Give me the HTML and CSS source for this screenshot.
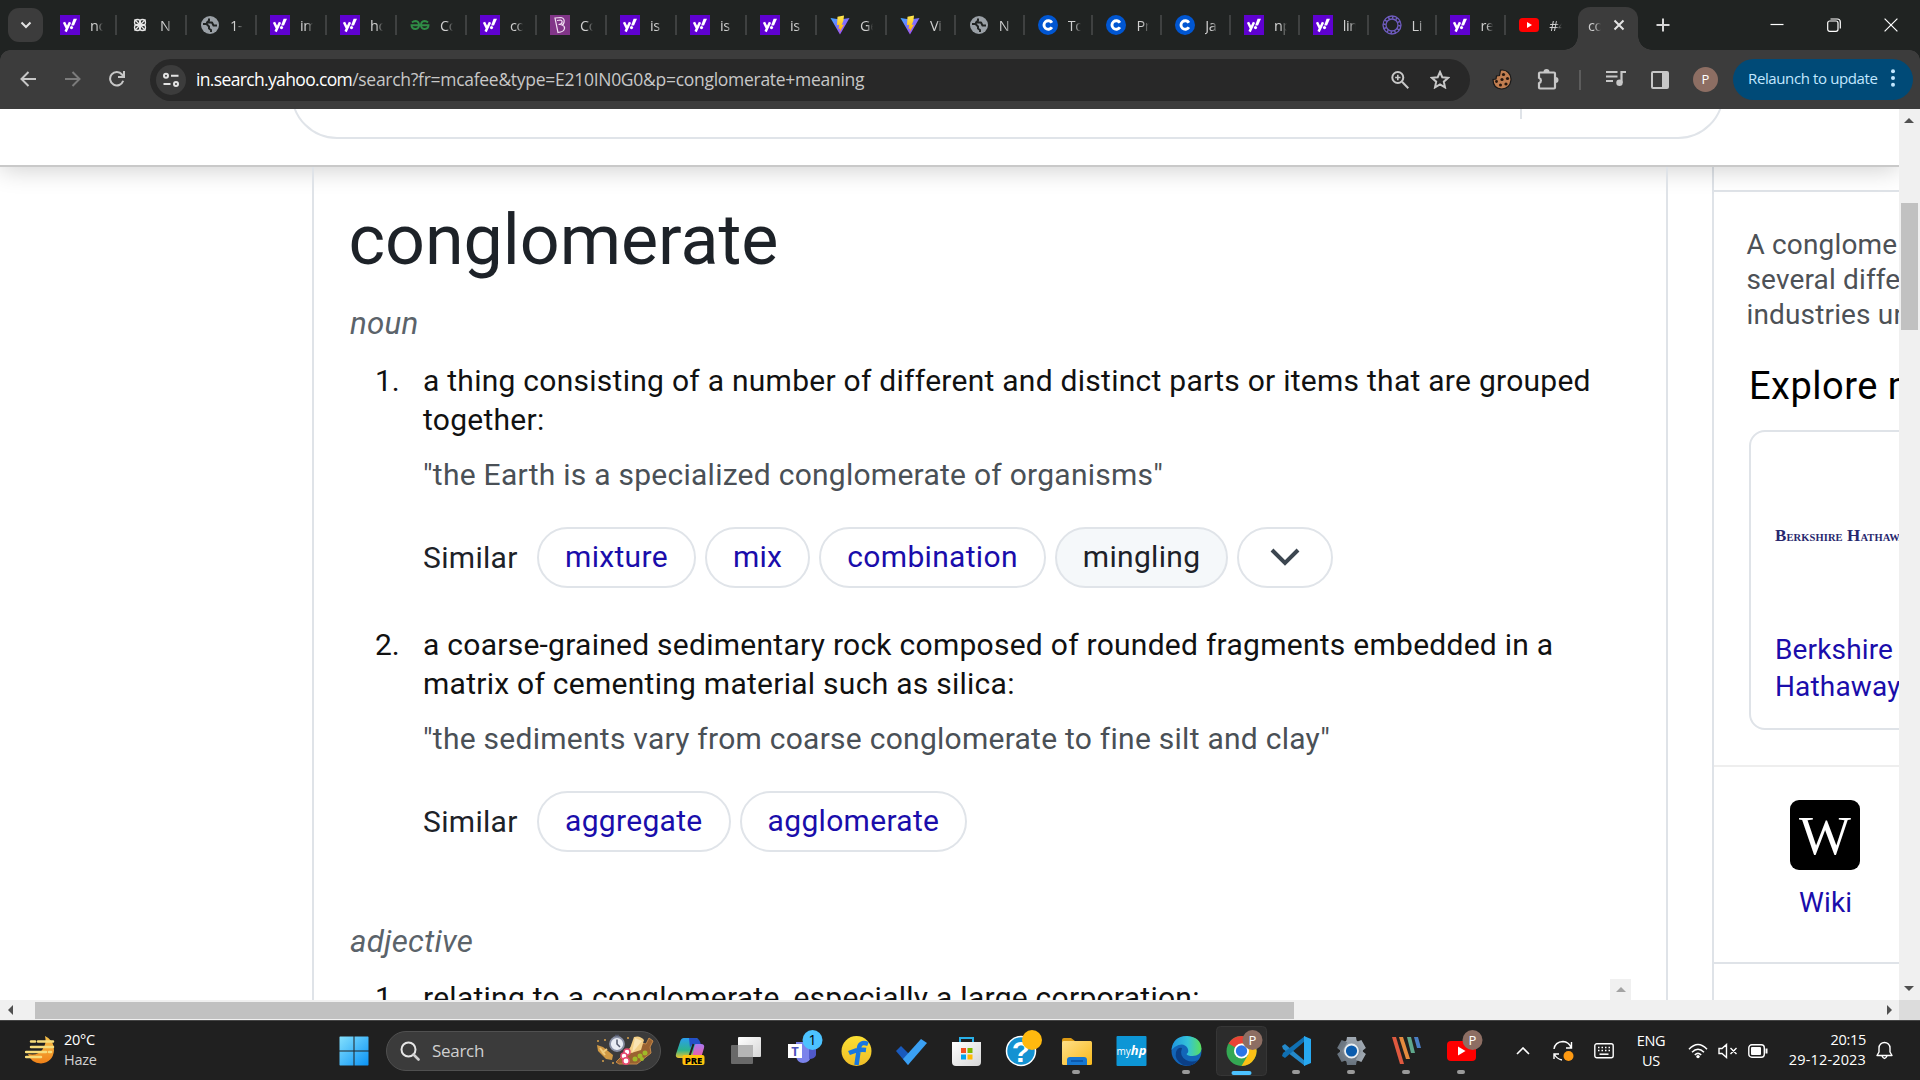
FILE: index.html
```html
<!DOCTYPE html>
<html lang="en">
<head>
<meta charset="utf-8">
<title>conglomerate meaning</title>
<link rel="stylesheet" href="styles.css">
</head>
<body>
<svg class="defs" width="0" height="0">
  <defs>
    <linearGradient id="g-vite" x1="0" y1="0" x2="1" y2="1"><stop offset="0" stop-color="#41a8ff"/><stop offset="1" stop-color="#bd34fe"/></linearGradient>
    <linearGradient id="g-bolt" x1="0" y1="0" x2="0" y2="1"><stop offset="0" stop-color="#ffea50"/><stop offset="1" stop-color="#ffa800"/></linearGradient>
    <linearGradient id="g-win" x1="0" y1="0" x2="1" y2="1"><stop offset="0" stop-color="#84e0fd"/><stop offset="1" stop-color="#0a93f5"/></linearGradient>
    <linearGradient id="g-moon" x1="0" y1="0" x2="0" y2="1"><stop offset="0" stop-color="#f6c24c"/><stop offset="1" stop-color="#f08118"/></linearGradient>
    <linearGradient id="g-cop1" x1="0" y1="0" x2="0" y2="1"><stop offset="0" stop-color="#2a9df0"/><stop offset=".6" stop-color="#2cb38f"/><stop offset="1" stop-color="#f0c62c"/></linearGradient>
    <linearGradient id="g-cop2" x1="0" y1="0" x2="0" y2="1"><stop offset="0" stop-color="#a878f0"/><stop offset=".6" stop-color="#e660b0"/><stop offset="1" stop-color="#f59350"/></linearGradient>
    <linearGradient id="g-white" x1="0" y1="0" x2="1" y2="1"><stop offset="0" stop-color="#fff"/><stop offset="1" stop-color="#d6d6d6"/></linearGradient>
    <linearGradient id="g-folder" x1="0" y1="0" x2="1" y2="1"><stop offset="0" stop-color="#ffe088"/><stop offset="1" stop-color="#f8b91c"/></linearGradient>
    <linearGradient id="g-edge" x1="0" y1="0" x2="1" y2="0"><stop offset="0" stop-color="#1e95e0"/><stop offset=".55" stop-color="#34c3d8"/><stop offset="1" stop-color="#5be05c"/></linearGradient>
    <linearGradient id="g-gear" x1="0" y1="0" x2="0" y2="1"><stop offset="0" stop-color="#a0a9b2"/><stop offset="1" stop-color="#67727d"/></linearGradient>
    <linearGradient id="g-flip" x1="0" y1="0" x2="0" y2="1"><stop offset="0" stop-color="#fbe033"/><stop offset="1" stop-color="#efbd28"/></linearGradient>
  </defs>
  <symbol id="yahoo" viewBox="0 0 20 20"><rect width="20" height="20" fill="#5f01d1"/><path d="M4 7.200l2.900 6M10 7.200L5.600 16.600" stroke="#fff" stroke-width="2.500" fill="none"/><path d="M13.600 3.800h3.400l-3 6.600h-2.900z" fill="#fff"/><circle cx="11.500" cy="12.600" r="1.600" fill="#fff"/></symbol>
  <symbol id="knot" viewBox="0 0 20 20"><g fill="none" stroke="#e6e6e6" stroke-width="1.300"><circle cx="7.500" cy="7.500" r="3"/><circle cx="12.500" cy="7.500" r="3"/><circle cx="7.500" cy="12.500" r="3"/><circle cx="12.500" cy="12.500" r="3"/><path d="M4.500 4.500l11 11M15.500 4.500l-11 11"/></g></symbol>
  <symbol id="globe" viewBox="0 0 20 20"><circle cx="10" cy="10" r="9" fill="#9aa0a6"/><path d="M3 9h3.500l2.500 2.500v2l2 1.500v2M9 3.500v2L7 7.500h5l1.500 3H17" stroke="#202322" stroke-width="2" fill="none" stroke-linejoin="round"/></symbol>
  <symbol id="gfg" viewBox="0 0 20 20"><g fill="none" stroke="#2f8d46" stroke-width="1.900"><path d="M2 7.500Q3.500 6 5.500 6 9 6.300 9 10T5.500 14Q1.500 14 1.500 10.300h17Q18.500 14 14.500 14 11 13.700 11 10T14.500 6Q16.500 6 18 7.500"/></g></symbol>
  <symbol id="byju" viewBox="0 0 20 20"><rect width="20" height="20" fill="#813588"/><path d="M5 3l6-.5q4 1 3 5-.5 2-2 2.500 3 1 2.500 3.500Q14 17 8 17.500zM7 5.500l3.500-.5q2 .5 1.500 2.500T8.500 9.500" fill="none" stroke="#f1dff3" stroke-width="1.200"/></symbol>
  <symbol id="vite" viewBox="0 0 20 20"><path d="M.5 3L10 19.500 19.500 3 10 4.500z" fill="url(#g-vite)"/><path d="M14 .5L7.500 1.800 7 10.200l2.200-.5L8.500 14l1.800-.6-.8 4L14 9.500l-2.300.4 1.700-4.200z" fill="url(#g-bolt)"/></symbol>
  <symbol id="coursera" viewBox="0 0 20 20"><circle cx="10" cy="10" r="10" fill="#0056d2"/><path d="M13.900 12.300a4.300 4.300 0 1 1 0-4.600" fill="none" stroke="#fff" stroke-width="2.900"/></symbol>
  <symbol id="ring" viewBox="0 0 20 20"><g fill="none" stroke="#6f5cc0"><circle cx="10" cy="10" r="9" stroke-width="1.300"/><circle cx="10" cy="10" r="6" stroke-width="1.300"/><circle cx="10" cy="10" r="7.500" stroke-width="2.600" stroke-dasharray="1.500 2.400"/></g></symbol>
  <symbol id="youtube" viewBox="0 0 20 20"><rect y="3" width="20" height="14" rx="3.500" fill="#f00"/><path d="M8 7v6l5-3z" fill="#fff"/></symbol>
</svg>

<header class="tabstrip">
  <button class="tab-search"><svg width="12" height="8" viewBox="0 0 12 8"><path d="M1.500 1.500L6 6l4.500-4.500" fill="none" stroke="#e3e3e3" stroke-width="2"/></svg></button>
  <div class="tab"><svg><use href="#yahoo"/></svg><span>no</span></div>
  <div class="tab"><svg><use href="#knot"/></svg><span>N</span></div>
  <div class="tab"><svg><use href="#globe"/></svg><span>1-</span></div>
  <div class="tab"><svg><use href="#yahoo"/></svg><span>im</span></div>
  <div class="tab"><svg><use href="#yahoo"/></svg><span>ho</span></div>
  <div class="tab"><svg><use href="#gfg"/></svg><span>Co</span></div>
  <div class="tab"><svg><use href="#yahoo"/></svg><span>co</span></div>
  <div class="tab"><svg><use href="#byju"/></svg><span>Co</span></div>
  <div class="tab"><svg><use href="#yahoo"/></svg><span>is</span></div>
  <div class="tab"><svg><use href="#yahoo"/></svg><span>is</span></div>
  <div class="tab"><svg><use href="#yahoo"/></svg><span>is</span></div>
  <div class="tab"><svg><use href="#vite"/></svg><span>Ge</span></div>
  <div class="tab slim"><svg><use href="#vite"/></svg><span>Vi</span></div>
  <div class="tab slim"><svg><use href="#globe"/></svg><span>N</span></div>
  <div class="tab slim"><svg><use href="#coursera"/></svg><span>To</span></div>
  <div class="tab slim"><svg><use href="#coursera"/></svg><span>Pr</span></div>
  <div class="tab slim"><svg><use href="#coursera"/></svg><span>Ja</span></div>
  <div class="tab slim"><svg><use href="#yahoo"/></svg><span>np</span></div>
  <div class="tab slim"><svg><use href="#yahoo"/></svg><span>lin</span></div>
  <div class="tab slim"><svg><use href="#ring"/></svg><span>Li</span></div>
  <div class="tab slim"><svg><use href="#yahoo"/></svg><span>re</span></div>
  <div class="tab slim last"><svg><use href="#youtube"/></svg><span>#4</span></div>
  <div class="tab-active"><span>co</span><svg width="12" height="12" viewBox="0 0 12 12"><path d="M1.500 1.500l9 9M10.500 1.500l-9 9" stroke="#e3e3e3" stroke-width="2"/></svg></div>
  <svg class="plus" width="14" height="14" viewBox="0 0 14 14"><path d="M7 .5v13M.5 7h13" stroke="#d6d6d6" stroke-width="2"/></svg>
  <div class="window-buttons">
    <svg width="14" height="14" viewBox="0 0 14 14"><path d="M.5 6.500h13" stroke="#fff" stroke-width="1.200"/></svg>
    <svg width="14" height="14" viewBox="0 0 14 14"><g fill="none" stroke="#fff" stroke-width="1.200"><rect x=".7" y="3" width="10.300" height="10.300" rx="2"/><path d="M3.500 1h6.800q3 0 3 3v6.500"/></g></svg>
    <svg width="14" height="14" viewBox="0 0 14 14"><path d="M.6.600l12.800 12.800M13.400.6L.6 13.400" stroke="#fff" stroke-width="1.200"/></svg>
  </div>
</header>

<nav class="toolbar">
  <svg class="nav-icon" viewBox="0 0 16 16"><path d="M8.500 1L1.500 8l7 7M1.500 8H16" fill="none" stroke="#c7c7c7" stroke-width="2"/></svg>
  <svg class="nav-icon" viewBox="0 0 16 16"><path d="M7.500 1l7 7-7 7M14.500 8H0" fill="none" stroke="#7b7b7b" stroke-width="2"/></svg>
  <svg class="nav-icon" viewBox="0 0 16 16"><path d="M14.200 9.800A6.700 6.700 0 1 1 13 3.500L15 5.800M15 0v6H9" fill="none" stroke="#c7c7c7" stroke-width="2"/></svg>
  <div class="omnibox">
    <div class="site-info"><svg width="16" height="16" viewBox="0 0 16 16"><g fill="none" stroke="#e3e3e3" stroke-width="2"><circle cx="3" cy="3.800" r="2"/><path d="M8 3.800h7.500M.5 12h7"/><circle cx="13" cy="12" r="2"/></g></svg></div>
    <div class="url">in.search.yahoo.com<span>/search?fr=mcafee&amp;type=E210IN0G0&amp;p=conglomerate+meaning</span></div>
    <svg class="zoom-icon" width="18" height="18" viewBox="0 0 18 18"><g fill="none" stroke="#c7c7c7" stroke-width="2"><circle cx="6.800" cy="6.500" r="5.500"/><path d="M11 10.700l6.300 6.500"/><path d="M6.800 3.800v5.400M4.100 6.500h5.400" stroke-width="1.600"/></g></svg>
    <svg class="star-icon" width="20" height="19" viewBox="0 0 20 19"><path d="M10 2l2.300 5.200 5.800.6-4.300 3.900 1.200 5.700-5-2.900-5 2.900 1.200-5.700L1.900 7.800l5.800-.6z" fill="none" stroke="#c7c7c7" stroke-width="2"/></svg>
  </div>
  <svg class="cookie" width="20" height="21" viewBox="0 0 20 21"><path d="M8.500 1.200Q13 .3 16.300 3.500 19.300 6.500 19 11q-1 8.500-9.300 9Q1 19.500 1 10.500l3-.5.500-3 3-.5z" fill="#c07d50" stroke="#191919" stroke-width="1.200"/><g fill="#25160e"><circle cx="11.500" cy="5.500" r="1.600"/><circle cx="15.500" cy="9.500" r="1.600"/><circle cx="10" cy="10.500" r="1.600"/><circle cx="4.500" cy="12.500" r="1.400"/><circle cx="14" cy="15" r="1.600"/><circle cx="8.500" cy="16" r="1.500"/></g></svg>
  <svg class="puzzle" width="22" height="22" viewBox="0 0 22 22"><path d="M3 4.500h14q1 0 1 1v14q0 1-1 1H3q-1 0-1-1v-4.200a3 3 0 0 0 0-5.600V5.500q0-1 1-1z" fill="none" stroke="#c7c7c7" stroke-width="2.200"/><path d="M6.500 4a3 3 0 0 1 6 0zM18.500 9a3 3 0 0 1 0 6z" fill="#c7c7c7"/></svg>
  <div class="divider"></div>
  <svg class="music" width="20" height="17" viewBox="0 0 20 17"><path d="M0 2h11.500M0 6.500h11.500M0 11h7M15.500 13V2H20" fill="none" stroke="#c7c7c7" stroke-width="2.200"/><circle cx="13.500" cy="12.800" r="3.200" fill="#c7c7c7"/></svg>
  <svg class="panel" width="18" height="18" viewBox="0 0 18 18"><rect x="1" y="1" width="16" height="16" rx="1" fill="none" stroke="#c7c7c7" stroke-width="2"/><path d="M11 1h6v16h-6z" fill="#c7c7c7"/></svg>
  <div class="avatar">P</div>
  <div class="relaunch"><span>Relaunch to update</span><svg width="4" height="18" viewBox="0 0 4 18"><g fill="#c2e7ff"><circle cx="2" cy="2.200" r="2"/><circle cx="2" cy="9" r="2"/><circle cx="2" cy="15.800" r="2"/></g></svg></div>
</nav>

<div class="window-body">
  <div class="page">
    <div class="searchbar"><div class="searchbox"><i></i></div></div>
    <div class="columns">
      <main class="dictionary">
        <h1>conglomerate</h1>
        <p class="pos">noun</p>
        <section class="sense">
          <div class="num">1.</div>
          <div>
            <p class="meaning">a thing consisting of a number of different and distinct parts or items that are grouped<br>together:</p>
            <p class="example">"the Earth is a specialized conglomerate of organisms"</p>
            <div class="similar"><span class="label">Similar</span><a>mixture</a><a>mix</a><a>combination</a><a class="plain">mingling</a><a class="more"><svg width="30" height="18" viewBox="0 0 30 18"><path d="M2 2l13 13L28 2" fill="none" stroke="#3c4650" stroke-width="4"/></svg></a></div>
          </div>
        </section>
        <section class="sense">
          <div class="num">2.</div>
          <div>
            <p class="meaning">a coarse-grained sedimentary rock composed of rounded fragments embedded in a<br>matrix of cementing material such as silica:</p>
            <p class="example">"the sediments vary from coarse conglomerate to fine silt and clay"</p>
            <div class="similar"><span class="label">Similar</span><a>aggregate</a><a>agglomerate</a></div>
          </div>
        </section>
        <p class="pos adjective">adjective</p>
        <section class="sense">
          <div class="num">1.</div>
          <div><p class="meaning">relating to a conglomerate, especially a large corporation:</p></div>
        </section>
        <div class="inner-scroll"><svg width="10" height="5" viewBox="0 0 10 5"><path d="M0 5l5-5 5 5z" fill="#a3a3a3"/></svg></div>
      </main>
      <aside class="sidebar">
        <div class="summary">
          <p>A conglome<br>several diffe<br>industries un</p>
          <h2>Explore more</h2>
          <div class="card"><div class="logo">B<small>ERKSHIRE</small> H<small>ATHAWAY</small></div><a>Berkshire<br>Hathaway</a></div>
        </div>
        <div class="wiki"><div class="w">W</div><a>Wiki</a></div>
      </aside>
    </div>
  </div>
  <div class="vscroll">
    <svg width="10" height="5" viewBox="0 0 10 5"><path d="M0 5l5-5 5 5z" fill="#505050"/></svg>
    <div class="vthumb"></div>
    <svg class="down" width="10" height="5" viewBox="0 0 10 5"><path d="M0 0l5 5 5-5z" fill="#505050"/></svg>
  </div>
</div>
<div class="hscroll">
  <svg width="5" height="10" viewBox="0 0 5 10"><path d="M5 0L0 5l5 5z" fill="#505050"/></svg>
  <div class="hthumb"></div>
  <svg class="right" width="5" height="10" viewBox="0 0 5 10"><path d="M0 0l5 5-5 5z" fill="#505050"/></svg>
  <div class="corner"></div>
</div>

<footer class="taskbar">
  <div class="weather">
    <svg width="31" height="30" viewBox="0 0 31 30"><path d="M20 1q9 4 9 14.500Q28 27 16 28.500 6 28 3 19q10 2 14.500-4.500Q22 8 20 1z" fill="url(#g-moon)"/><path d="M6 6.500h4M13 6.500h15M6 12h22M1 17h20M24 17h2M1 22h15" stroke="#f7dc7a" stroke-width="2.500" stroke-linecap="round"/></svg>
    <div>20°C<br><span>Haze</span></div>
  </div>
  <svg class="start" width="30" height="30" viewBox="0 0 30 30"><path d="M1 .5h13.500v14H.5V1zM15.500.5H29l.5.5v13.500h-14zM.5 15.500h14v14H1l-.5-.5zM15.500 15.500h14V29l-.5.500H15.500z" fill="url(#g-win)"/></svg>
  <div class="search">
    <svg width="20" height="20" viewBox="0 0 20 20"><circle cx="8.500" cy="8.500" r="7" fill="none" stroke="#e6e6e6" stroke-width="2"/><path d="M13.500 13.500l5 5" stroke="#d0d0d0" stroke-width="2.600" stroke-linecap="round"/></svg>
    <span>Search</span>
    <svg class="food" width="62" height="34" viewBox="0 0 62 34"><path d="M22 28L42 8l10 2 3-6 4 3-3 6 1 6-14 11H25z" fill="#9a6230" stroke="#c58a4a"/><path d="M34 20L40 3q6-2 10 3L47 16z" fill="#f3cf86"/><path d="M41 4l7 3-10 12" fill="#fae4b3"/><path d="M3 11l6 2 10 8-1 5-6-1L4 17z" fill="#d19a45"/><path d="M6 14l5 7M13 15l-5 4" stroke="#f0ca7c" stroke-width="2"/><circle cx="23" cy="10" r="7" fill="#e9ecf4" stroke="#8990a5" stroke-width="1.800"/><path d="M23 5.500V10l3 3M21 1.500h4" stroke="#52586b" stroke-width="1.500" fill="none"/><g fill="#fff" stroke="#e84870" stroke-width="1.500"><circle cx="33" cy="18" r="3"/><circle cx="30" cy="22" r="3"/><circle cx="32" cy="27" r="3.200"/></g><g fill="#9fb928"><circle cx="46" cy="22" r="2.500"/><circle cx="51" cy="19" r="2.500"/><circle cx="41" cy="25" r="2.500"/><circle cx="48" cy="25" r="2"/></g><g fill="#d8a24c"><circle cx="11" cy="6" r="1"/><circle cx="34" cy="4" r="1"/><circle cx="19" cy="29" r="1"/><circle cx="9" cy="27" r="1"/><circle cx="4" cy="7" r="1"/></g></svg>
  </div>
  <div class="apps">
    <svg viewBox="0 0 55 60"><path d="M20 17h11q4 0 3 3l-5 14q-1 3-5 3h-9q-4 0-3-4l4-12q1-4 4-4z" fill="url(#g-cop1)"/><path d="M25 17h7q4 1 5 7l-5-1q-5 0-6 4z" fill="#2450c8"/><path d="M32 23h5q4 0 3 4l-3 10q-1 4-5 4h-9q4 0 5-4l2-10q1-4 2-4z" fill="url(#g-cop2)"/><path d="M29.500 23l-4 12" stroke="#202020" stroke-width="2"/><rect x="18.500" y="34" width="22" height="10" rx="2" fill="#ffc40d"/><text x="29.500" y="42.500" class="pre">PRE</text></svg>
    <svg viewBox="0 0 55 60"><rect x="12" y="24" width="22" height="19" rx="1" fill="#696969"/><rect x="19" y="16" width="23" height="20" rx="1" fill="url(#g-white)"/><rect x="19" y="24" width="15" height="12" fill="#b5b5b5"/></svg>
    <svg viewBox="0 0 55 60"><path d="M22 21h15v14q-1 7-8 7-6 0-7-7z" fill="#7b83eb"/><path d="M35 25h7v9q-1 4-7 4z" fill="#5059c9"/><rect x="14" y="23" width="14" height="14" fill="#fff"/><text x="21" y="34.500" class="teams">T</text><circle cx="38.500" cy="19" r="10" fill="#4cc2ff"/><text x="38.500" y="24" class="badge-num">1</text></svg>
    <svg viewBox="0 0 55 60"><circle cx="27.500" cy="30" r="15" fill="url(#g-flip)"/><path d="M39 23q-8-3-9 4l-2.500 17M20 32q9-4 17-3" fill="none" stroke="#1777e0" stroke-width="4.500"/></svg>
    <svg viewBox="0 0 55 60"><path d="M12 30l5-5 11 11-4 8z" fill="#195abd"/><path d="M24 44l-5-6L37 18l6 4z" fill="#3aa0f3"/></svg>
    <svg viewBox="0 0 55 60"><path d="M21 22v-5h13v5" fill="none" stroke="#29b0e8" stroke-width="2"/><path d="M13 21h29v20q0 4-4 4H17q-4 0-4-4z" fill="url(#g-white)"/><path fill="#f25022" d="M22 27h5v5h-5z"/><path fill="#7fba00" d="M28.500 27h5v5h-5z"/><path fill="#00a4ef" d="M22 33.500h5v5h-5z"/><path fill="#ffb900" d="M28.500 33.500h5v5h-5z"/></svg>
    <svg viewBox="0 0 55 60"><circle cx="27" cy="30" r="14.500" fill="#1492d2" stroke="#fff" stroke-width="1.500"/><text x="27" y="41" class="help">?</text><circle cx="38" cy="19" r="10" fill="#ffb90f"/></svg>
    <svg viewBox="0 0 55 60"><path d="M13 19q0-2 2-2h7l4 3h16v9H13z" fill="#dc9a14"/><rect x="13" y="20" width="30" height="24" rx="1.500" fill="url(#g-folder)"/><path d="M18 44v-5q0-3 3-3h14q3 0 3 3v5z" fill="#1677d2"/><path d="M22 40h12" stroke="#0a4fa0" stroke-width="1.500"/></svg>
    <svg viewBox="0 0 55 60"><rect x="12.500" y="15" width="30" height="30" rx="1" fill="#0d96d6"/><text x="27.500" y="34" class="myhp">my<tspan>hp</tspan></text></svg>
    <svg viewBox="0 0 55 60"><circle cx="27.500" cy="30" r="15" fill="#1265b8"/><path d="M12.500 29Q14 15 28 15q14 1 14.500 13-1 7-9 7-5 0-6-2 3-2 1-6-3-5-9-3-5 2-7 5z" fill="url(#g-edge)"/><path d="M23 27q-3 8 4 12 6 3 12 0-6 8-15 5-9-5-7-13 2-5 6-4z" fill="#0b3f86"/></svg>
    <svg viewBox="0 0 55 60"><rect x="2.500" y="5.500" width="50" height="49" rx="4" fill="#2c2c2c" stroke="#363636"/><circle cx="27.500" cy="30" r="15" fill="#34a853"/><path d="M27.500 30L14.500 22.500A15 15 0 0 1 40.500 22.500H27.500z" fill="#ea4335"/><path d="M27.500 22.500h13A15 15 0 0 1 27.500 45l6.500-11z" fill="#fbc116"/><circle cx="27.500" cy="30" r="7.500" fill="#fff"/><circle cx="27.500" cy="30" r="5.700" fill="#2a75e8"/><circle cx="38.500" cy="19" r="10" fill="#8d6e63"/><text x="38.500" y="24" class="prof">P</text><rect x="17.500" y="50" width="20" height="4" rx="2" fill="#4cc2ff"/></svg>
    <svg viewBox="0 0 55 60"><path d="M13 25l3-2 20 17v5L14 28z" fill="#2489ca"/><path d="M13 35l3 2 20-17v-5L14 32z" fill="#1070b3"/><path d="M35 15l7 3v24l-7 3z" fill="#27a9f2"/></svg>
    <svg viewBox="0 0 55 60"><g fill="url(#g-gear)"><circle cx="27.500" cy="30" r="11.500"/><path d="M23 16h9l1 6H22zM23 44h9l1-6H22z"/><path d="M23 16h9l1 6H22zM23 44h9l1-6H22z" transform="rotate(60 27.500 30)"/><path d="M23 16h9l1 6H22zM23 44h9l1-6H22z" transform="rotate(120 27.500 30)"/></g><circle cx="27.500" cy="30" r="6.500" fill="#0b5cad" stroke="#e9eef2" stroke-width="1.800"/></svg>
    <svg viewBox="0 0 55 60"><path d="M13 16h4l8 27h-4z" fill="#e0593f"/><path d="M20 16h4l7 22h-4z" fill="#e58b3e"/><path d="M28 16h4l4 16h-4z" fill="#5fa88c"/><path d="M35 16h4l3 11h-4z" fill="#4a7fc4"/></svg>
    <svg viewBox="0 0 55 60"><rect x="13" y="20" width="29" height="20" rx="4" fill="#f00"/><path d="M24 25.500v9l7.500-4.500z" fill="#fff"/><circle cx="38.500" cy="19" r="10" fill="#8d6e63"/><text x="38.500" y="24" class="prof">P</text></svg>
  </div>
  <div class="tray">
    <svg class="chev" width="14" height="8" viewBox="0 0 14 8"><path d="M1 7l6-6 6 6" fill="none" stroke="#fff" stroke-width="1.600"/></svg>
    <svg class="sync" width="21" height="22" viewBox="0 0 21 22"><path d="M1 9Q2 2 10 1.500q6 .5 8 6M18.500 2v6H13M1 19v-5h5M1.500 14.500Q4 19 9 20" fill="none" stroke="#fff" stroke-width="1.400"/><circle cx="15.500" cy="16" r="5" fill="#ff9a12"/></svg>
    <svg class="kbd" width="20" height="16" viewBox="0 0 20 16"><rect x=".8" y=".8" width="18.400" height="14" rx="2" fill="none" stroke="#fff" stroke-width="1.400"/><path d="M4 4.500h12.500M4 7.500h12.500" stroke="#fff" stroke-width="1.500" stroke-dasharray="1.500 2"/><path d="M5.500 11.200h9" stroke="#fff" stroke-width="1.500"/></svg>
    <div class="lang">ENG<br>US</div>
    <svg class="wifi" width="20" height="16" viewBox="0 0 20 16"><g fill="none" stroke="#fff" stroke-width="1.500"><path d="M1 6.200q9-9.500 18 0M4 9.200q6-6 12 0M6.800 12q3.200-3.200 6.400 0"/></g><circle cx="10" cy="13.600" r="1.700" fill="#fff"/></svg>
    <svg class="mute" width="20" height="16" viewBox="0 0 20 16"><path d="M1 5.500h3L8.500 1.500v13L4 10.500H1zM12.500 5l6 6M18.500 5l-6 6" fill="none" stroke="#fff" stroke-width="1.400"/></svg>
    <svg class="bat" width="20" height="14" viewBox="0 0 20 14"><rect x=".8" y=".8" width="15.500" height="12.400" rx="3" fill="none" stroke="#fff" stroke-width="1.400"/><rect x="3" y="3" width="10" height="8" rx="1" fill="#fff"/><path d="M18.500 4.500v5" stroke="#fff" stroke-width="2"/></svg>
    <div class="clock">20:15<br><span>29-12-2023</span></div>
    <svg class="bell" width="17" height="19" viewBox="0 0 17 19"><path d="M1 14.500l2-3.500V7a5.500 5.500 0 0 1 11 0v4l2 3.500zM6 15q2.500 5 5 0" fill="none" stroke="#fff" stroke-width="1.400" stroke-linejoin="round"/></svg>
  </div>
</footer>
<div class="running"><i></i><i class="edge"></i><i class="code"></i><i></i><i></i><i></i></div>
</body>
</html>
```
FILE: styles.css
```css
* { box-sizing: border-box; }
body { margin: 0; width: 1920px; height: 1080px; overflow: hidden; display: flex; flex-direction: column; background: #fff; font-family: "Open Sans", "Noto Sans", sans-serif; position: relative; }
svg { display: block; flex: none; }
p, h1, h2 { margin: 0; font-weight: 400; }
.defs { position: absolute; }

/* tab strip */
.tabstrip { height: 50px; flex: none; background: #202322; display: flex; align-items: flex-start; }
.tab-search { width: 35px; height: 34px; margin: 8px 4px 0 8px; border: 0; padding: 0; border-radius: 11px; background: #3c3c3c; display: flex; align-items: center; justify-content: center; flex: none; }
.tab { width: 70px; height: 20px; margin-top: 15px; padding-left: 13px; border-right: 2px solid #3f4141; display: flex; align-items: center; gap: 10px; flex: none; }
.tab.slim { width: 68.8px; }
.tab.last { border-color: transparent; }
.tab svg { width: 20px; height: 20px; }
.tab span, .tab-active span { width: 13px; overflow: hidden; white-space: nowrap; font-size: 14.500px; line-height: 21px; letter-spacing: -.4px; color: #cfcfcf; -webkit-mask-image: linear-gradient(90deg, #000 50%, transparent); mask-image: linear-gradient(90deg, #000 50%, transparent); }
.tab-active { position: relative; width: 60px; height: 43px; margin: 7px 0 0 3px; padding: 0 13px 7px 10px; border-radius: 12px 12px 0 0; background: #3c3c3c; display: flex; align-items: center; justify-content: space-between; flex: none; }
.tab-active::before, .tab-active::after { content: ""; position: absolute; bottom: 0; width: 14px; height: 14px; }
.tab-active::before { left: -14px; background: radial-gradient(circle at 0 0, transparent 13.500px, #3c3c3c 14px); }
.tab-active::after { right: -14px; background: radial-gradient(circle at 100% 0, transparent 13.500px, #3c3c3c 14px); }
.plus { margin: 18px 0 0 18.500px; }
.window-buttons { margin: 18px 22px 0 auto; display: flex; gap: 43px; }

/* toolbar */
.toolbar { height: 59px; flex: none; background: #3c3c3c; display: flex; align-items: center; padding-left: 20px; position: relative; }
.toolbar::before, .toolbar::after { content: ""; position: absolute; top: 0; width: 10px; height: 10px; }
.toolbar::before { left: 0; background: radial-gradient(circle at 100% 100%, transparent 9.500px, #202322 10px); }
.toolbar::after { right: 0; background: radial-gradient(circle at 0 100%, transparent 9.500px, #202322 10px); }
.nav-icon { width: 16px; height: 16px; margin: -1px 28.500px 0 0; }
.nav-icon:nth-child(3) { margin-right: 25px; }
.omnibox { width: 1320px; height: 42px; border-radius: 21px; background: #282828; display: flex; align-items: center; padding-left: 6px; flex: none; }
.site-info { width: 30px; height: 30px; border-radius: 50%; background: #3c3c3c; display: flex; align-items: center; justify-content: center; }
.url { margin: -2px 0 0 10px; font-size: 17.500px; letter-spacing: -.65px; color: #fff; white-space: nowrap; }
.url span { color: #c7c7c7; letter-spacing: -.28px; }
.zoom-icon { margin-left: auto; }
.star-icon { margin: 0 20px 0 21px; }
.cookie { margin-left: 22px; }
.puzzle { margin: -2px 0 0 25px; }
.divider { width: 2px; height: 20px; margin-left: 20px; background: #5c5c5c; }
.music { margin: -3px 0 0 25px; }
.panel { margin-left: 25px; }
.avatar { width: 25px; height: 25px; margin: -1px 0 0 24px; border-radius: 50%; background: #8d6e63; color: #fff; font-size: 13px; line-height: 25px; text-align: center; }
.relaunch { width: 180px; height: 41px; margin: -1px 0 0 15px; padding: 0 18px 2px 15px; border-radius: 21px; background: #004a77; color: #c2e7ff; display: flex; align-items: center; justify-content: space-between; font-size: 15px; letter-spacing: -.38px; white-space: nowrap; }

/* page */
.window-body { height: 891px; flex: none; display: flex; background: #fff; }
.page { width: 1899px; height: 891px; overflow: hidden; font-family: Roboto, sans-serif; }
.searchbar { position: relative; height: 58px; border-bottom: 2px solid #c9c9c9; background: #fff; box-shadow: 0 2px 26px rgba(0,0,0,.2); display: flex; align-items: flex-end; padding: 0 0 26px 291px; clip-path: inset(0 0 -40px 0); }
.searchbox { width: 1433px; height: 92px; flex: none; border: 2px solid #e0e4e9; border-radius: 46px; padding: 0 200px 18px 0; display: flex; justify-content: flex-end; }
.searchbox i { width: 2px; background: #dfe3e8; }
.columns { display: flex; height: 833px; padding-left: 312px; }
.dictionary { position: relative; width: 1356px; border: 2px solid #dfe3e8; border-width: 0 2px; padding: 33px 0 0 36px; flex: none; color: #111; font-size: 30px; line-height: 39px; letter-spacing: .27px; white-space: nowrap; }
.dictionary h1 { margin-left: -1.500px; font-size: 70px; line-height: 80px; letter-spacing: -.05px; color: #1d2228; }
.pos { margin-top: 24px; font-size: 31.300px; font-style: italic; color: #5b636a; }
.sense { display: flex; margin-top: 17.500px; }
.sense + .sense { margin-top: 37px; }
.num { width: 73px; padding-left: 25px; flex: none; letter-spacing: 0; }
.meaning { letter-spacing: .265px; }
.example { margin-top: 16px; letter-spacing: .26px; color: #4a5056; }
.similar { margin-top: 33px; height: 61px; display: flex; align-items: center; gap: 9px; letter-spacing: .32px; color: #1d2228; }
.label { width: 105px; }
.similar a { height: 61px; padding: 0 26px; border: 2px solid #e0e4e9; border-radius: 31px; line-height: 56px; color: #1a0dab; }
.similar a.plain { background: #f5f8fa; color: #1d2228; }
.similar a.more { width: 96px; display: flex; align-items: center; justify-content: center; padding: 0; }
.pos.adjective { margin-top: 70px; }
.inner-scroll { position: absolute; right: 35px; bottom: 0; width: 21px; height: 21px; background: #f0f0f0; display: flex; align-items: center; justify-content: center; }
.sidebar { margin-left: 44px; width: 500px; flex: none; border-left: 2px solid #dfe3e8; white-space: nowrap; padding-top: 23px; }
.summary { height: 577px; border-top: 2px solid #dfe3e8; border-bottom: 2px solid #eee; padding: 35px 0 0 32.500px; font-size: 28px; line-height: 35px; letter-spacing: .15px; color: #4d5156; }
.summary h2 { margin: 29px 0 0 2.500px; font-size: 38px; line-height: 50px; letter-spacing: .5px; color: #000; }
.card { margin: 19px 0 0 2.500px; width: 320px; height: 300px; border: 2px solid #dfe3e8; border-radius: 16px; padding: 91px 0 0 24px; line-height: 37px; }
.card a, .wiki a { color: #1a0dab; letter-spacing: .15px; }
.logo { height: 108px; font: bold 17px/26px "Liberation Serif", serif; letter-spacing: .1px; color: #28286e; }
.logo small { font-size: 10.500px; }
.wiki { height: 197px; border-bottom: 2px solid #dfe3e8; padding: 33px 0 0 76px; display: flex; flex-direction: column; align-items: flex-start; font-size: 28px; line-height: 36px; }
.w { width: 70px; height: 70px; border-radius: 9px; background: #000; color: #fff; font: 55px/71px "Liberation Serif", serif; text-align: center; }
.wiki a { margin: 15px 0 0 9px; }
.vscroll { width: 21px; background: #f0f0f0; display: flex; flex-direction: column; align-items: center; padding: 9px 1px 9px 0; }
.vthumb { width: 17px; height: 127px; margin-top: 80px; background: #c1c1c1; }
.down { margin-top: auto; }
.hscroll { height: 20px; flex: none; background: #f0f0f0; display: flex; align-items: center; padding-left: 8px; }
.hthumb { width: 1259px; height: 17px; margin-left: 22px; background: #c1c1c1; }
.right { margin-left: auto; }
.corner { width: 21px; height: 20px; margin-left: 7px; background: #dcdcdc; }

/* taskbar */
.taskbar { height: 60px; flex: none; background: #202020; border-top: 1px solid #444; display: flex; align-items: center; color: #fff; font-size: 14.500px; line-height: 20px; letter-spacing: -.3px; white-space: nowrap; padding-bottom: 1px; }
.weather { width: 339px; padding-left: 25px; display: flex; align-items: center; gap: 8px; flex: none; }
.weather span { color: #d0d0d0; }
.start { margin-top: 1px; }
.search { width: 275px; height: 40px; margin: 1px 0 0 17px; padding: 0 4px 0 13px; border: 1px solid #505050; border-radius: 20px; background: #3b3b3b; display: flex; align-items: center; gap: 12px; font-size: 17px; color: #d0d0d0; flex: none; }
.food { margin-left: auto; }
.apps { display: flex; margin: 1px 0 0 2.500px; }
.apps svg { width: 55px; height: 60px; }
.apps text { text-anchor: middle; letter-spacing: 0; }
.pre { font: 800 9.500px "Open Sans", sans-serif; }
.teams { font: bold 13px "Open Sans", sans-serif; fill: #4b53bc; }
.badge-num { font: 14px "Open Sans", sans-serif; }
.help { font: bold 30px "Liberation Sans", sans-serif; fill: #fff; }
.myhp { font: 10px "Open Sans", sans-serif; fill: #fff; }
.myhp tspan { font: italic bold 13px "Open Sans", sans-serif; }
.prof { font: 13px "Open Sans", sans-serif; fill: #fff; }
.tray { display: flex; align-items: center; flex: 1; margin-top: 1px; }
.chev { margin-left: 27.500px; }
.sync { margin-left: 23px; }
.kbd { margin-left: 20px; }
.lang { width: 40px; margin-left: 17px; text-align: center; }
.wifi { margin-left: 17px; }
.mute { margin-left: 10px; }
.bat { margin-left: 10px; }
.clock { width: 80px; margin: -1px 0 0 18px; text-align: right; }
.clock span { letter-spacing: .15px; }
.bell { margin-left: 10px; }
/* markers under the apps that have open windows */
.running { position: absolute; left: 1072px; top: 1070px; display: flex; gap: 47px; }
.running i { width: 8px; height: 4px; border-radius: 2px; background: #9a9a9a; }
.running .edge, .running .code { margin-left: 55px; }
```
